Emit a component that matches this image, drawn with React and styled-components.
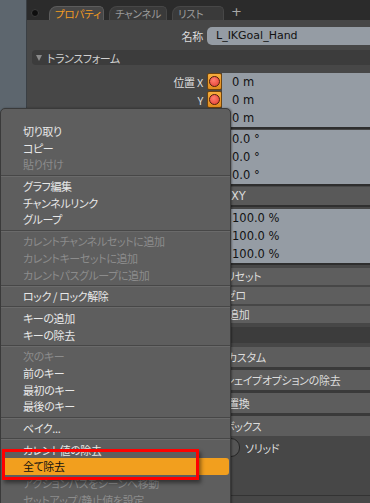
import styled, { createGlobalStyle } from "styled-components";

const GlobalStyle = createGlobalStyle`
  html, body {
    margin: 0;
    padding: 0;
  }
  body {
    background: #474747;
    font-family: "Noto Sans CJK JP", "Noto Sans", sans-serif;
  }
`;

const jp = `"Noto Sans CJK JP", "Noto Sans", sans-serif`;
const num = `"DejaVu Sans", "Liberation Sans", sans-serif`;

const menuItems = [
  { text: "切り取り" },
  { text: "コピー" },
  { text: "貼り付け", off: true },
  { sep: true },
  { text: "グラフ編集" },
  { text: "チャンネルリンク" },
  { text: "グループ" },
  { sep: true },
  { text: "カレントチャンネルセットに追加", off: true },
  { text: "カレントキーセットに追加", off: true },
  { text: "カレントパスグループに追加", off: true },
  { sep: true },
  { text: "ロック / ロック解除" },
  { sep: true },
  { text: "キーの追加" },
  { text: "キーの除去" },
  { sep: true },
  { text: "次のキー", off: true },
  { text: "前のキー" },
  { text: "最初のキー" },
  { text: "最後のキー" },
  { sep: true },
  { text: "ベイク..." },
  { sep: true },
  { text: "カレント値の除去" },
  { text: "全て除去", active: true },
  { text: "アクションパスをシーンへ移動", off: true },
  { text: "セットアップ/静止値を設定", off: true },
];

const channelGroups = [
  { label: "位置", rows: ["0 m", "0 m", "0 m"] },
  { label: "回転", rows: ["0.0 °", "0.0 °", "0.0 °"] },
];

export default function App() {
  return (
    <>
      <GlobalStyle />
      <Screen>
        <SideStrip />
        <Panel>
          <TabBar>
            <Grip />
            <Tab $active $w={55}>プロパティ</Tab>
            <Tab $w={58}>チャンネル</Tab>
            <Tab $w={52}>リスト</Tab>
            <AddTab>+</AddTab>
          </TabBar>

          <Body>
            <NameRow>
              <Label>名称</Label>
              <NameField>L_IKGoal_Hand</NameField>
            </NameRow>

            <SectionHeader $top={5}>
              <Arrow />
              トランスフォーム
            </SectionHeader>

            {channelGroups.map((group, gi) => (
              <ChannelGroup key={gi} $top={gi === 0 ? 4 : 0}>
                {group.rows.map((value, i) => (
                  <ChannelRow key={i}>
                    <Label>
                      {i === 0 ? group.label + " " : ""}
                      {"XYZ"[i]}
                    </Label>
                    <KeyButton />
                    <ValueField>{value}</ValueField>
                  </ChannelRow>
                ))}
              </ChannelGroup>
            ))}

            <OrderRow>
              <Label>回転順序</Label>
              <OrderField>ZXY</OrderField>
            </OrderRow>

            <ChannelGroup>
              {["100.0 %", "100.0 %", "100.0 %"].map((value, i) => (
                <ChannelRow key={i}>
                  <Label>
                    {i === 0 ? "スケール " : ""}
                    {"XYZ"[i]}
                  </Label>
                  <KeyButton />
                  <ValueField>{value}</ValueField>
                </ChannelRow>
              ))}
            </ChannelGroup>

            <ButtonStack>
              <PanelButton $indent={194}>リセット</PanelButton>
              <PanelButton $indent={193}>ゼロ</PanelButton>
              <PanelButton $indent={196}>追加</PanelButton>
            </ButtonStack>

            <SectionHeader $top={4} $h={16}>
              <Arrow />
              表示
            </SectionHeader>

            <OptionStack>
              <OptionRow $indent={195}>カスタム</OptionRow>
              <OptionRow $indent={192}>シェイプオプションの除去</OptionRow>
              <OptionRow $indent={196}>置換</OptionRow>
              <OptionRow $indent={192}>ボックス</OptionRow>
            </OptionStack>

            <RadioArea>
              <Segment />
              <RadioText>ソリッド</RadioText>
            </RadioArea>

            <BottomField />
          </Body>
        </Panel>

        <ContextMenu>
          {menuItems.map((item, i) =>
            item.sep ? (
              <MenuSep key={i} />
            ) : (
              <MenuItem key={i} $off={item.off} $active={item.active}>
                {item.text}
              </MenuItem>
            )
          )}
        </ContextMenu>

        <Callout />
      </Screen>
    </>
  );
}

const Screen = styled.div`
  position: relative;
  width: 370px;
  height: 503px;
  display: flex;
  overflow: hidden;
`;

const SideStrip = styled.div`
  width: 26px;
  flex: none;
  background: #5d666e;
  border-right: 1px solid #3a3f44;
`;

const Panel = styled.div`
  flex: 1;
  min-width: 0;
  display: flex;
  flex-direction: column;
  background: #474747;
`;

const TabBar = styled.div`
  height: 20px;
  flex: none;
  display: flex;
  align-items: flex-end;
  gap: 5px;
  background: #2b2b2b;
  padding-left: 4px;
`;

const Grip = styled.div`
  width: 6px;
  height: 6px;
  border-radius: 50%;
  background: #0e0e0e;
  border: 1px solid #3c3c3c;
  align-self: center;
  margin-top: 6px;
  margin-right: 5px;
`;

const Tab = styled.div`
  width: ${(p) => p.$w}px;
  height: 14px;
  box-sizing: border-box;
  flex: none;
  overflow: hidden;
  border: 1px solid ${(p) => (p.$active ? "#5c5c5c" : "#474747")};
  border-bottom: none;
  border-radius: 8px 5px 0 0;
  background: ${(p) => (p.$active ? "#474747" : "#3a3a3a")};
  color: ${(p) => (p.$active ? "#f29c22" : "#9a9a9a")};
  font-family: ${jp};
  font-size: 10.5px;
  font-feature-settings: "palt";
  letter-spacing: -0.2px;
  line-height: 13px;
  padding-left: 5px;
  white-space: nowrap;
`;

const AddTab = styled.div`
  color: #a8a8a8;
  font-family: ${num};
  font-size: 13px;
  line-height: 16px;
  margin-left: 2px;
`;

const Body = styled.div`
  flex: 1;
  display: flex;
  flex-direction: column;
  padding-top: 7px;
`;

const Label = styled.div`
  width: 180px;
  flex: none;
  box-sizing: border-box;
  padding-right: 4px;
  text-align: right;
  color: #dcdcdc;
  font-family: ${jp};
  font-size: 11px;
  font-feature-settings: "palt";
  letter-spacing: -0.3px;
  white-space: nowrap;
  overflow: hidden;
`;

const NameRow = styled.div`
  display: flex;
  height: 18px;
  line-height: 18px;
`;

const NameField = styled.div`
  flex: 1;
  background: #959ca4;
  border-radius: 5px 0 0 5px;
  padding-left: 9px;
  color: #121212;
  font-family: ${num};
  font-size: 11px;
  line-height: 18px;
`;

const SectionHeader = styled.div`
  margin: ${(p) => p.$top}px 0 4px 5px;
  height: ${(p) => p.$h || 15}px;
  display: flex;
  align-items: center;
  gap: 5px;
  padding-left: 4px;
  background: #3c3c3c;
  border-radius: 4px 0 0 4px;
  color: #d0d0d0;
  font-family: ${jp};
  font-size: 11px;
  font-feature-settings: "palt";
  letter-spacing: -0.4px;
`;

const Arrow = styled.span`
  width: 0;
  height: 0;
  border-left: 3.5px solid transparent;
  border-right: 3.5px solid transparent;
  border-top: 6px solid #8a8a8a;
`;

const ChannelGroup = styled.div`
  margin-top: ${(p) => p.$top || 0}px;
  display: flex;
  flex-direction: column;
  border-bottom: 2px solid #2e2e2e;
  margin-bottom: 1px;
`;

const ChannelRow = styled.div`
  display: flex;
  height: 18px;
  line-height: 18px;
`;

const KeyButton = styled.div`
  width: 15px;
  height: 17px;
  flex: none;
  box-sizing: border-box;
  background: linear-gradient(#f6ac3c, #e08b1f);
  border: 1px solid #6d4410;
  border-radius: 2px;
  display: flex;
  align-items: flex-start;
  justify-content: center;
  padding-top: 2px;

  &::after {
    content: "";
    width: 9px;
    height: 9px;
    border-radius: 50%;
    background: radial-gradient(circle at 40% 35%, #ff7f6e, #e23b31);
    border: 1px solid #4e1a12;
  }
`;

const ValueField = styled.div`
  flex: 1;
  background: #959ca4;
  padding-left: 10px;
  color: #121212;
  font-family: ${num};
  font-size: 11.5px;
  white-space: nowrap;
`;

const OrderRow = styled.div`
  display: flex;
  height: 18px;
  line-height: 18px;
  border-bottom: 2px solid #303030;
  margin-bottom: 2px;
`;

const OrderField = styled.div`
  flex: 1;
  background: #595959;
  padding-left: 16px;
  color: #dadada;
  font-family: ${num};
  font-size: 11.5px;
`;

const ButtonStack = styled.div`
  display: flex;
  flex-direction: column;
  gap: 2px;
  margin: 2px 0 0 5px;
`;

const PanelButton = styled.div`
  height: 17px;
  line-height: 17px;
  background: #5e5e5e;
  padding-left: ${(p) => p.$indent}px;
  color: #dcdcdc;
  font-family: ${jp};
  font-size: 11px;
  font-feature-settings: "palt";
  letter-spacing: -0.3px;
  white-space: nowrap;
`;

const OptionStack = styled.div`
  display: flex;
  flex-direction: column;
  gap: 3px;
  margin-left: 5px;
  background: #3a3a3a;
`;

const OptionRow = styled.div`
  height: 20px;
  line-height: 20px;
  background: #5d5d5d;
  padding-left: ${(p) => p.$indent}px;
  color: #dcdcdc;
  font-family: ${jp};
  font-size: 11px;
  font-feature-settings: "palt";
  letter-spacing: -0.3px;
  white-space: nowrap;
`;

const RadioArea = styled.div`
  height: 57px;
  display: flex;
  align-items: flex-start;
  gap: 5px;
  padding: 2px 0 0 195px;
  border-bottom: 1px solid #333;
`;

const Segment = styled.div`
  width: 18px;
  height: 19px;
  box-sizing: border-box;
  background: #555;
  border: 1px solid #262626;
  border-radius: 0 9px 9px 0;
`;

const RadioText = styled.div`
  line-height: 19px;
  margin-top: 1px;
  color: #dcdcdc;
  font-family: ${jp};
  font-size: 11px;
  font-feature-settings: "palt";
  letter-spacing: -0.3px;
`;

const BottomField = styled.div`
  margin-top: 8px;
  height: 20px;
  background: #8e969e;
`;

const ContextMenu = styled.div`
  position: absolute;
  left: 0;
  top: 108px;
  width: 231px;
  height: 410px;
  box-sizing: border-box;
  padding-top: 14px;
  background: #5e5e5e;
  border: 1px solid #3a3a3a;
  border-radius: 5px 5px 0 0;
  box-shadow: 1px 0 2px rgba(0, 0, 0, 0.35);
`;

const MenuItem = styled.div`
  height: 16.7px;
  line-height: 16.7px;
  margin: 0 1px;
  padding-left: 21px;
  border-radius: ${(p) => (p.$active ? "3px" : "0")};
  background: ${(p) => (p.$active ? "#f29f1e" : "transparent")};
  color: ${(p) => (p.$active ? "#111" : p.$off ? "#8c8c8c" : "#e8e8e8")};
  font-family: ${jp};
  font-size: 11px;
  font-feature-settings: "palt";
  letter-spacing: -0.4px;
  white-space: nowrap;
`;

const MenuSep = styled.div`
  height: 1px;
  margin: 1.5px 0;
  border-top: 1px solid #474747;
  background: #6a6a6a;
`;

const Callout = styled.div`
  position: absolute;
  left: 2px;
  top: 449px;
  width: 197px;
  height: 31px;
  box-sizing: border-box;
  border: 3px solid #f00;
  box-shadow: 2px 3px 4px rgba(0, 0, 0, 0.45);
`;
